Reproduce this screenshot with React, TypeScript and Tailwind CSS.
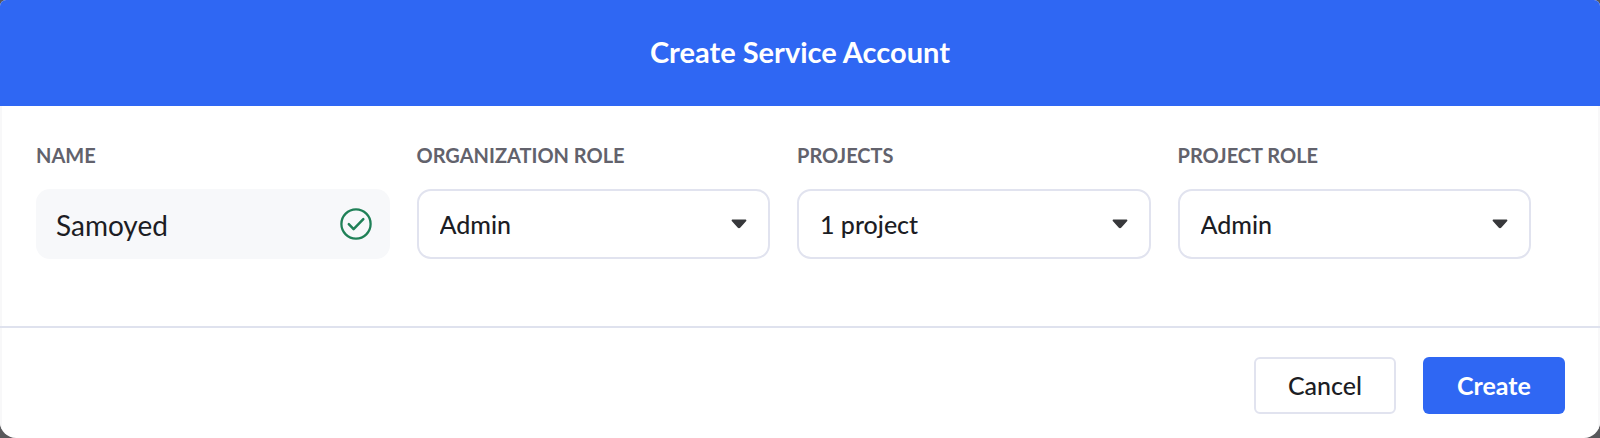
import React, { useState } from 'react';

const LABEL = 'block text-[20px] leading-6 font-bold text-[#62626c] whitespace-nowrap';

interface SelectFieldProps {
  id: string;
  label: string;
  options: string[];
}

const SelectField = ({ id, label, options }: SelectFieldProps) => {
  const [value, setValue] = useState(options[0]);

  return (
    <div>
      <label htmlFor={id} className={LABEL}>{label}</label>
      <div className="relative mt-[22px]">
        <select
          id={id}
          value={value}
          onChange={(e) => setValue(e.target.value)}
          className="w-full h-[70px] appearance-none rounded-[14px] border-2 border-[#e1e3ef] bg-white pl-[21px] pr-14 pt-0.5 text-[25px] font-medium text-[#1c1d24]"
        >
          {options.map((option) => (
            <option key={option} value={option}>{option}</option>
          ))}
        </select>
        {/* Caret */}
        <svg viewBox="0 0 16 10" className="pointer-events-none absolute right-[23px] top-[30px] w-4 h-[10px]" fill="#37383b">
          <path d="M1.7 0.5h12.6c1 0 1.4 1 .7 1.7L9.4 8.6a1.9 1.9 0 0 1-2.8 0L1 2.2C.3 1.5.7.5 1.7.5z" />
        </svg>
      </div>
    </div>
  );
};

const App = () => {
  const [name, setName] = useState('Samoyed');

  return (
    <div className="bg-[#58585b] font-['Lato',sans-serif]">
      <form className="overflow-hidden rounded-t-[6px] rounded-b-[16px] bg-white" onSubmit={(e) => e.preventDefault()}>
        <header className="bg-[#2f67f3] pt-[34px] pb-9 text-center">
          <h1 className="text-[29px] leading-9 font-bold text-white">Create Service Account</h1>
        </header>

        <div className="shadow-[inset_2px_0_#f8f8f9,inset_-2px_0_#f8f8f9]">
          <div className="grid grid-cols-4 gap-[27px] pt-[37px] pb-[67px] pl-9 pr-[69px]">
            <div>
              <label htmlFor="name" className={LABEL}>NAME</label>
              <div className="relative mt-[22px]">
                <input
                  id="name"
                  type="text"
                  value={name}
                  onChange={(e) => setName(e.target.value)}
                  className="w-full h-[70px] rounded-[14px] bg-[#f7f8fa] pl-5 pr-14 pt-0.5 text-[28px] text-[#1c1d24]"
                />
                {/* Valid name tick */}
                <svg viewBox="0 0 32 32" className="pointer-events-none absolute right-[18px] top-[19px] w-8 h-8" fill="none" stroke="#1f8057">
                  <circle cx="16" cy="16" r="14.6" strokeWidth="2.3" />
                  <path d="M8.8 16.2l4.8 4.9L23.3 11.1" strokeWidth="2.5" strokeLinecap="round" strokeLinejoin="round" />
                </svg>
              </div>
            </div>
            <SelectField id="organization-role" label="ORGANIZATION ROLE" options={['Admin', 'Member']} />
            <SelectField id="projects" label="PROJECTS" options={['1 project', 'All projects']} />
            <SelectField id="project-role" label="PROJECT ROLE" options={['Admin', 'Member']} />
          </div>

          <footer className="flex justify-end gap-[27px] border-t-2 border-[#dfe2ee] pt-[29px] pb-6 pr-[35px]">
            <button type="button" className="w-[142px] h-[57px] rounded-md border-2 border-[#e1e3ef] bg-white text-[25px] font-medium text-[#1c1d24]">
              Cancel
            </button>
            <button type="submit" className="w-[142px] h-[57px] rounded-md bg-[#2f67f3] text-[25px] font-bold text-white">
              Create
            </button>
          </footer>
        </div>
      </form>
    </div>
  );
};

export default App;
